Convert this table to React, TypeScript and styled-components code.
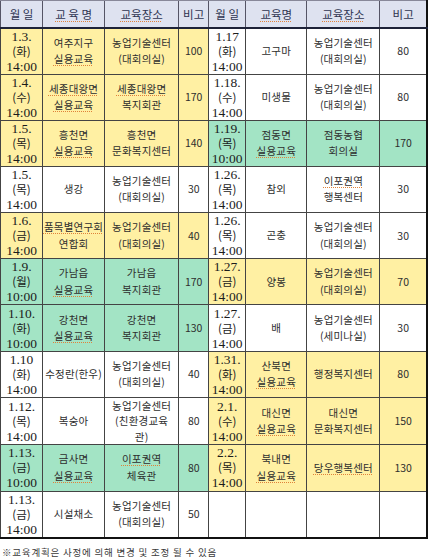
import React from 'react';
import styled, { createGlobalStyle } from 'styled-components';

const GlobalStyle = createGlobalStyle`
  html, body {
    margin: 0;
    padding: 0;
    background: #ffffff;
  }
  body {
    font-family: "Noto Sans CJK KR", "Noto Sans", sans-serif;
  }
`;

type Tone = 'y' | 'g' | 'w';

interface Half {
  date: string[];
  name: string[];
  place: string[];
  note: string;
  tone: Tone;
}

const toneColor: Record<Tone, string> = {
  y: '#fff0a3',
  g: '#a3e4c5',
  w: '#ffffff',
};

const Page = styled.div`
  width: 434px;
  height: 558px;
  display: flex;
  flex-direction: column;
  overflow: hidden;
`;

const Table = styled.table`
  width: 428px;
  border-collapse: collapse;
  table-layout: fixed;
  border-left: 1px solid #333;
  border-right: 2px solid #111;
  border-bottom: 2px solid #111;
`;

const HeadRow = styled.tr`
  height: 27px;
`;

const HeadCell = styled.th`
  background: #dee2f0;
  color: #2e3450;
  font-family: "Noto Sans CJK KR", sans-serif;
  font-weight: 400;
  font-size: 11.5px;
  line-height: 14px;
  padding: 0;
  text-align: center;
  border-left: 1px solid #556;
  border-top: 1px solid #889;
  border-bottom: 2px solid #1d2238;
  white-space: nowrap;
`;

const BodyRow = styled.tr`
  height: 46.2px;
`;

const Cell = styled.td<{ $tone: Tone }>`
  background: ${p => toneColor[p.$tone]};
  border: 1px solid #444;
  padding: 0;
  height: 45px;
  text-align: center;
  vertical-align: middle;
  overflow: visible;
  white-space: nowrap;
`;

const DateText = styled.div`
  font-family: "Liberation Serif", "Noto Sans CJK KR", serif;
  font-size: 13.5px;
  color: #1c1c1c;
`;

const DateLine = styled.div`
  height: 15px;
  line-height: 15px;
`;

const DayText = styled.span`
  font-size: 11.5px;
  font-family: "Noto Sans CJK KR", sans-serif;
  color: #1a1a1a;
`;

const KoText = styled.div`
  font-family: "Noto Sans CJK KR", sans-serif;
  font-size: 10.5px;
  color: #2e2e2e;
  letter-spacing: 0.2px;
`;

const KoLine = styled.div<{ $tight?: boolean }>`
  height: ${p => (p.$tight ? '15.5px' : '16.5px')};
  line-height: ${p => (p.$tight ? '15.5px' : '16.5px')};
`;

const NoteText = styled.div`
  font-family: "Noto Sans CJK KR", sans-serif;
  font-size: 10.5px;
  line-height: 14px;
  color: #2e2e2e;
`;

const Spell = styled.span`
  text-decoration: underline dotted #e0823a;
  text-decoration-thickness: 1px;
  text-underline-offset: 2px;
`;

const Footnote = styled.p`
  margin: 7px 0 0 2px;
  font-family: "Noto Sans CJK KR", sans-serif;
  font-size: 9.5px;
  line-height: 12px;
  letter-spacing: 0.8px;
  color: #3a3a3a;
`;

const left: Half[] = [
  { date: ['1.3.', '(화)', '14:00'], name: ['여주지구', '~실용교육'], place: ['농업기술센터', '(대회의실)'], note: '100', tone: 'y' },
  { date: ['1.4.', '(수)', '14:00'], name: ['~세종대왕면', '~실용교육'], place: ['~세종대왕면', '복지회관'], note: '170', tone: 'y' },
  { date: ['1.5.', '(목)', '14:00'], name: ['흥천면', '~실용교육'], place: ['흥천면', '문화복지센터'], note: '140', tone: 'y' },
  { date: ['1.5.', '(목)', '14:00'], name: ['생강'], place: ['농업기술센터', '(대회의실)'], note: '30', tone: 'w' },
  { date: ['1.6.', '(금)', '14:00'], name: ['~품목별연구회', '연합회'], place: ['농업기술센터', '(대회의실)'], note: '40', tone: 'y' },
  { date: ['1.9.', '(월)', '10:00'], name: ['가남읍', '~실용교육'], place: ['가남읍', '복지회관'], note: '170', tone: 'g' },
  { date: ['1.10.', '(화)', '10:00'], name: ['강천면', '~실용교육'], place: ['강천면', '복지회관'], note: '130', tone: 'g' },
  { date: ['1.10', '(화)', '14:00'], name: ['수정란(한우)'], place: ['농업기술센터', '(대회의실)'], note: '40', tone: 'w' },
  { date: ['1.12.', '(목)', '14:00'], name: ['복숭아'], place: ['농업기술센터', '(친환경교육', '관)'], note: '80', tone: 'w' },
  { date: ['1.13.', '(금)', '10:00'], name: ['금사면', '~실용교육'], place: ['~이포권역', '체육관'], note: '80', tone: 'g' },
  { date: ['1.13.', '(금)', '14:00'], name: ['시설채소'], place: ['농업기술센터', '(대회의실)'], note: '50', tone: 'w' },
];

const right: Half[] = [
  { date: ['1.17', '(화)', '14:00'], name: ['고구마'], place: ['농업기술센터', '(대회의실)'], note: '80', tone: 'w' },
  { date: ['1.18.', '(수)', '14:00'], name: ['미생물'], place: ['농업기술센터', '(대회의실)'], note: '80', tone: 'w' },
  { date: ['1.19.', '(목)', '10:00'], name: ['점동면', '~실용교육'], place: ['점동농협', '회의실'], note: '170', tone: 'g' },
  { date: ['1.26.', '(목)', '14:00'], name: ['참외'], place: ['~이포권역', '행복센터'], note: '30', tone: 'w' },
  { date: ['1.26.', '(목)', '14:00'], name: ['곤충'], place: ['농업기술센터', '(대회의실)'], note: '30', tone: 'w' },
  { date: ['1.27.', '(금)', '14:00'], name: ['양봉'], place: ['농업기술센터', '(대회의실)'], note: '70', tone: 'y' },
  { date: ['1.27.', '(금)', '14:00'], name: ['배'], place: ['농업기술센터', '(세미나실)'], note: '30', tone: 'w' },
  { date: ['1.31.', '(화)', '14:00'], name: ['산북면', '~실용교육'], place: ['행정복지센터'], note: '80', tone: 'y' },
  { date: ['2.1.', '(수)', '14:00'], name: ['대신면', '~실용교육'], place: ['대신면', '문화복지센터'], note: '150', tone: 'y' },
  { date: ['2.2.', '(목)', '14:00'], name: ['북내면', '~실용교육'], place: ['~당우행복센터'], note: '130', tone: 'y' },
  { date: [], name: [], place: [], note: '', tone: 'w' },
];

const widths = [42, 62, 74, 30, 37, 61, 73, 47];

// a leading "~" marks a word the spell checker underlined
const Lines = ({ lines }: { lines: string[] }) => (
  <KoText>
    {lines.map((l, i) => (
      <KoLine key={i} $tight={lines.length > 2}>
        {l.startsWith('~') ? <Spell>{l.slice(1)}</Spell> : l}
      </KoLine>
    ))}
  </KoText>
);

const HalfCells = ({ row }: { row: Half }) => (
  <>
    <Cell $tone={row.tone}>
      {row.date.length > 0 && (
        <DateText>
          <DateLine>{row.date[0]}</DateLine>
          <DateLine>
            <DayText>{row.date[1]}</DayText>
          </DateLine>
          <DateLine>{row.date[2]}</DateLine>
        </DateText>
      )}
    </Cell>
    <Cell $tone={row.tone}>
      <Lines lines={row.name} />
    </Cell>
    <Cell $tone={row.tone}>
      <Lines lines={row.place} />
    </Cell>
    <Cell $tone={row.tone}>
      <NoteText>{row.note}</NoteText>
    </Cell>
  </>
);

const App = () => (
  <Page>
    <GlobalStyle />
    <Table>
      <colgroup>
        {widths.map((w, i) => (
          <col key={i} style={{ width: w }} />
        ))}
      </colgroup>
      <thead>
        <HeadRow>
          <HeadCell>월 일</HeadCell>
          <HeadCell>
            <Spell>교 육 명</Spell>
          </HeadCell>
          <HeadCell>
            <Spell>교육장소</Spell>
          </HeadCell>
          <HeadCell>비고</HeadCell>
          <HeadCell>월 일</HeadCell>
          <HeadCell>
            <Spell>교육명</Spell>
          </HeadCell>
          <HeadCell>
            <Spell>교육장소</Spell>
          </HeadCell>
          <HeadCell>비고</HeadCell>
        </HeadRow>
      </thead>
      <tbody>
        {left.map((row, i) => (
          <BodyRow key={i}>
            <HalfCells row={row} />
            <HalfCells row={right[i]} />
          </BodyRow>
        ))}
      </tbody>
    </Table>
    <Footnote>
      ※교육계획은 <Spell>사정에</Spell> <Spell>의해</Spell> 변경 및 <Spell>조정</Spell> <Spell>될</Spell> 수 있음
    </Footnote>
  </Page>
);

export default App;
